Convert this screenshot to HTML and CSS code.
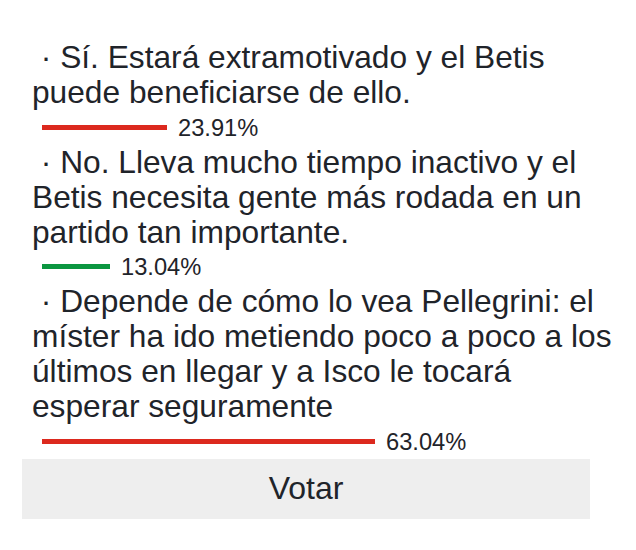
FILE: index.html
```html
<!DOCTYPE html>
<html lang="es">
<head>
<meta charset="utf-8">
<title>Encuesta</title>
<link rel="stylesheet" href="styles.css">
</head>
<body>
<div class="poll">
  <div class="option">
    <div class="label">&nbsp;· Sí. Estará extramotivado y el Betis puede beneficiarse de ello.</div>
    <div class="result"><span class="bar bar-red" style="width:125px"></span><span class="pct">23.91%</span></div>
  </div>
  <div class="option">
    <div class="label">&nbsp;· No. Lleva mucho tiempo inactivo y el Betis necesita gente más rodada en un partido tan importante.</div>
    <div class="result"><span class="bar bar-green" style="width:68px"></span><span class="pct">13.04%</span></div>
  </div>
  <div class="option">
    <div class="label">&nbsp;· Depende de cómo lo vea Pellegrini: el míster ha ido metiendo poco a poco a los últimos en llegar y a Isco le tocará esperar seguramente</div>
    <div class="result"><span class="bar bar-red" style="width:333px"></span><span class="pct">63.04%</span></div>
  </div>
  <button class="vote" type="button">Votar</button>
</div>
</body>
</html>
```
FILE: styles.css
```css
html, body {
  margin: 0;
  padding: 0;
  background: #ffffff;
}
body {
  font-family: "Liberation Sans", Arial, sans-serif;
  color: #1f242a;
}
.poll {
  padding: 40px 10px 0 22px;
}
.option {
  padding-left: 10px;
}
.label {
  font-size: 31.7px;
  line-height: 35px;
}
.result {
  display: flex;
  align-items: center;
  height: 34.5px;
  padding-left: 10px;
  font-size: 23.7px;
}
.bar {
  display: block;
  height: 5px;
  margin-right: 11px;
}
.bar-red {
  background: #dc291e;
}
.bar-green {
  background: #0b9640;
}
.pct {
  line-height: 1;
  margin-top: 2.6px;
}
.vote {
  display: block;
  width: 568px;
  height: 60px;
  margin-top: 0;
  border: 0;
  background: #eeeeee;
  font-family: "Liberation Sans", Arial, sans-serif;
  font-size: 32px;
  color: #1f242a;
  padding: 0;
}
```
